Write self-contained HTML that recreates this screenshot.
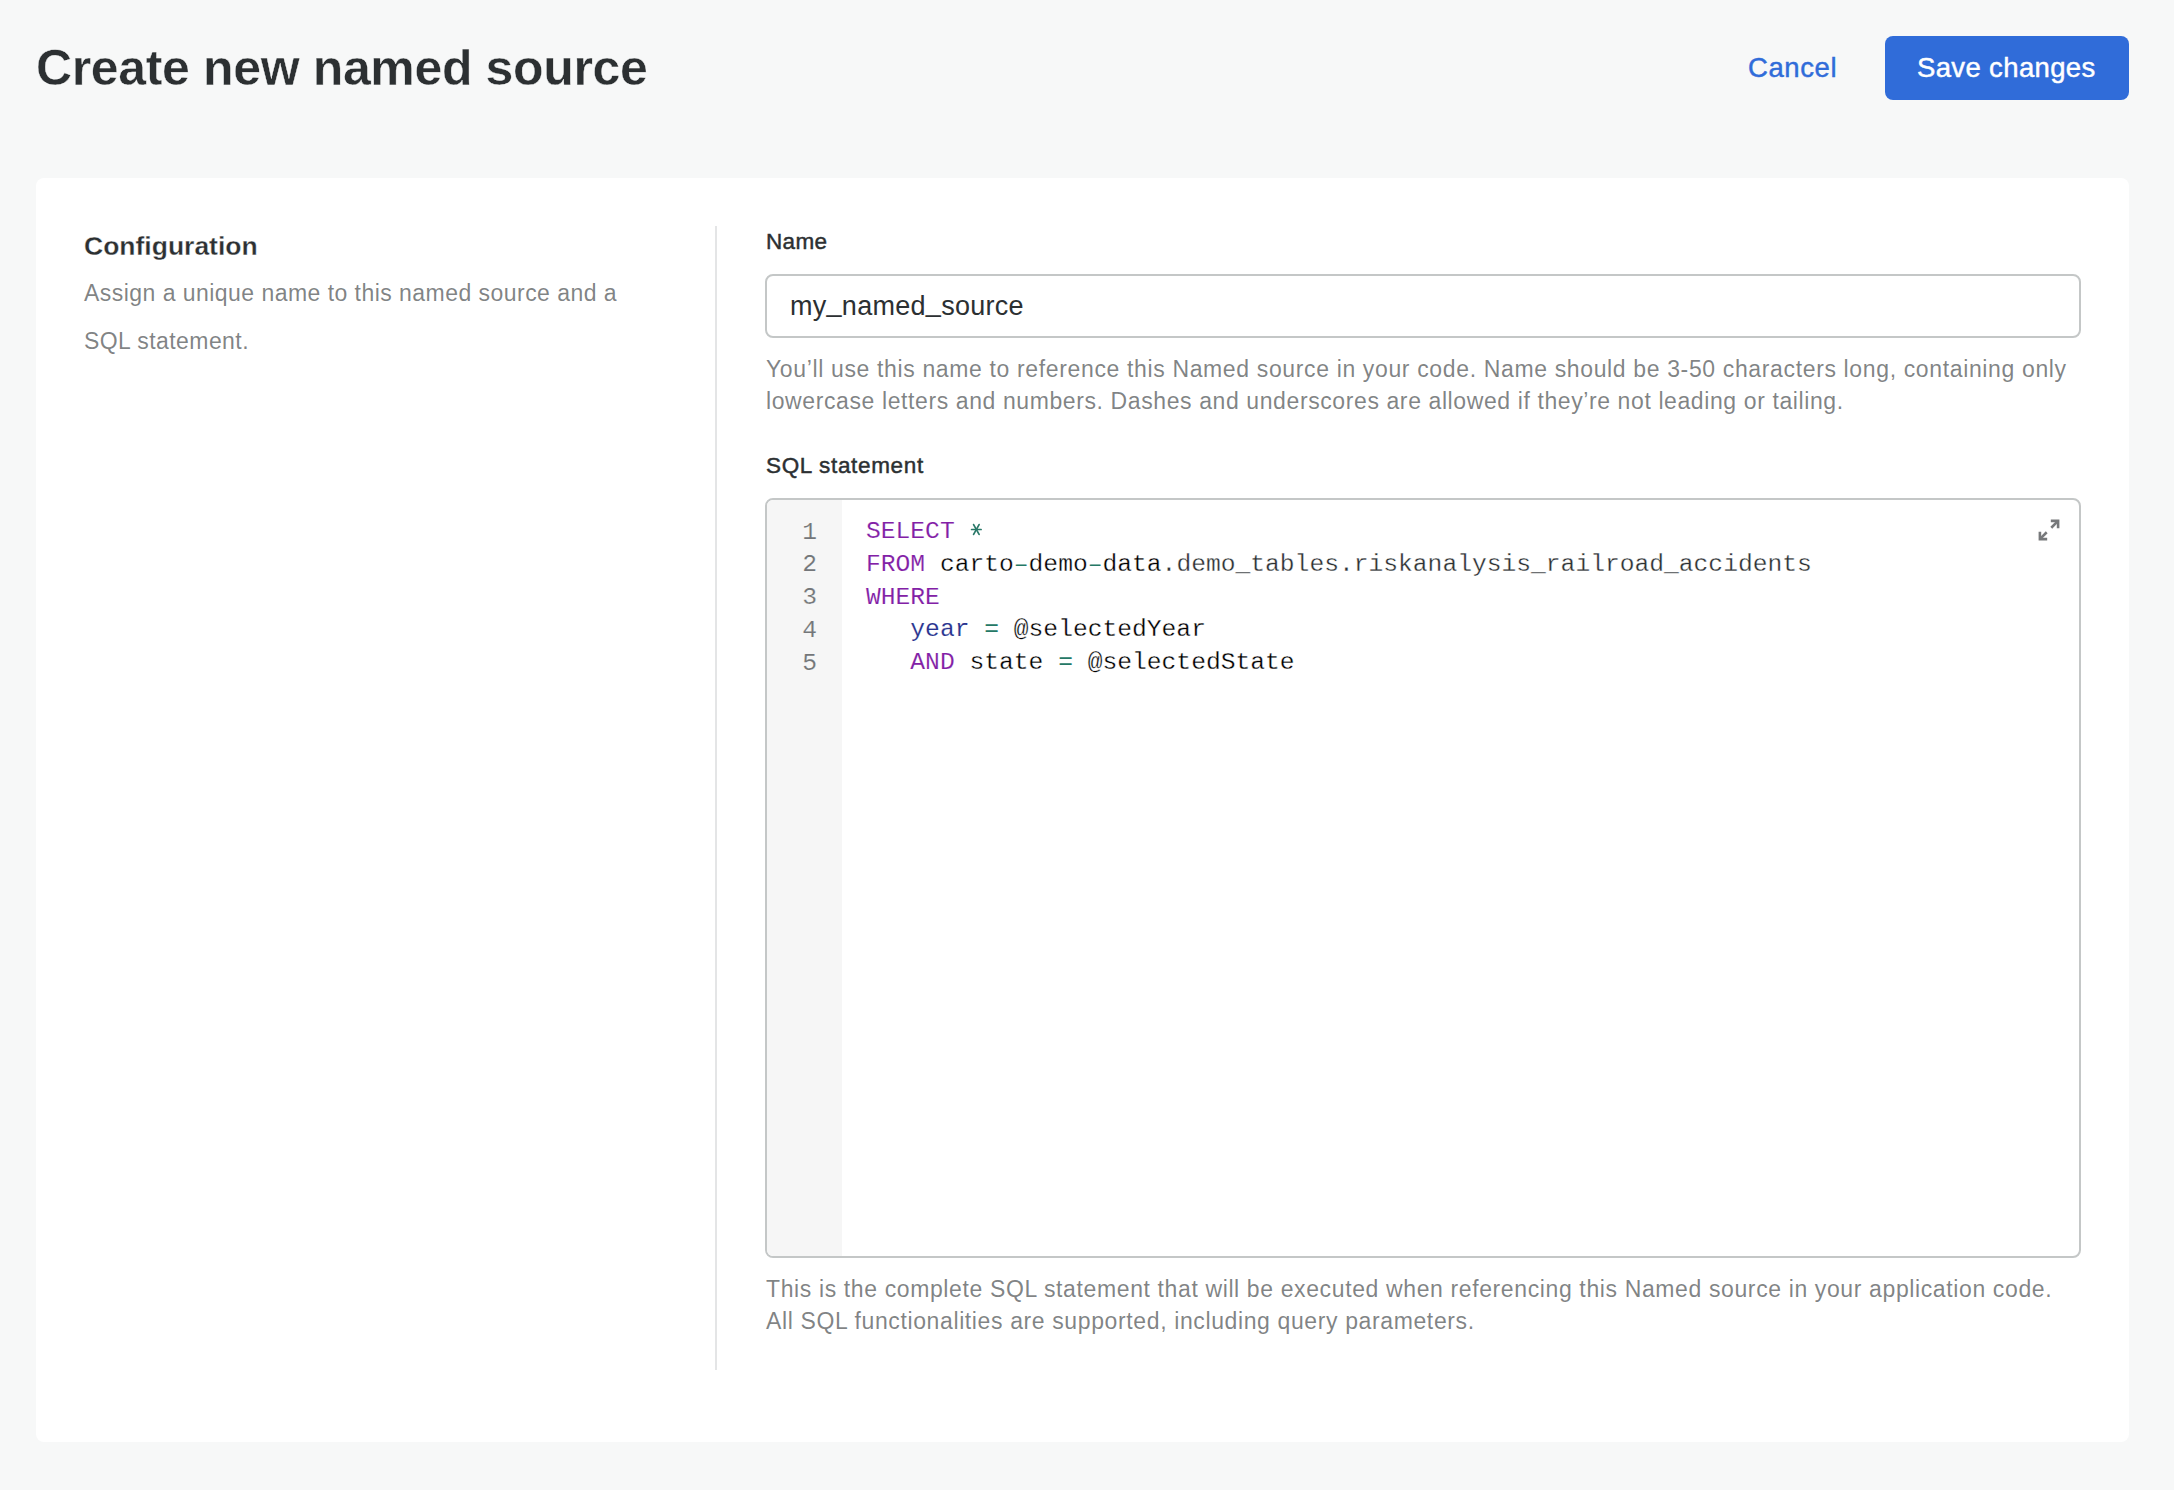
<!DOCTYPE html>
<html>
<head>
<meta charset="utf-8">
<style>
html,body{margin:0;padding:0;}
body{width:2174px;height:1490px;background:#f7f8f8;position:relative;overflow:hidden;font-family:"Liberation Sans",sans-serif;color:#2c3032;}
.abs{position:absolute;white-space:nowrap;}
#title{left:36px;top:39.5px;font-size:50px;letter-spacing:-0.36px;-webkit-text-stroke:0.4px #f7f8f8;font-weight:700;line-height:56px;color:#2c3032;}
#cancel{left:1748px;top:52px;font-size:27.5px;letter-spacing:0.6px;-webkit-text-stroke:0.45px #306cd9;line-height:32px;color:#306cd9;}
#save{left:1885px;top:36px;width:244px;height:64px;background:#306cd9;border-radius:8px;}
#savetxt{left:1917px;top:52px;font-size:27.5px;letter-spacing:0.36px;-webkit-text-stroke:0.45px #fff;line-height:32px;color:#fff;}
#card{left:36px;top:178px;width:2093px;height:1264px;background:#fff;border-radius:8px;}
#config{left:84px;top:230px;font-size:26.5px;font-weight:700;-webkit-text-stroke:0.3px #fff;line-height:32px;color:#2c3032;}
.desc{left:84px;font-size:23px;line-height:32px;color:rgba(44,48,50,0.6);}
#divider{left:715px;top:226px;width:2px;height:1144px;background:#e4e5e6;}
.label{left:766px;font-size:22.5px;letter-spacing:0.33px;-webkit-text-stroke:0.45px #2c3032;line-height:28px;color:#2c3032;}
#input{left:765px;top:274px;width:1312px;height:60px;border:2px solid #c4c7c7;border-radius:8px;background:#fff;}
#inputtxt{left:790px;top:290px;font-size:27px;letter-spacing:0.28px;line-height:32px;color:#2c3032;}
.help{left:766px;font-size:23px;line-height:32px;color:rgba(44,48,50,0.6);}
#editor{left:765px;top:498px;width:1312px;height:756px;border:2px solid #c4c7c7;border-radius:8px;background:#fff;overflow:hidden;}
#gutter{position:absolute;left:0;top:0;width:75px;height:100%;background:#f6f6f6;}
.ln{position:absolute;right:25px;font-family:"Liberation Mono",monospace;font-size:24.64px;-webkit-text-stroke:0.15px #f6f6f6;line-height:32.8px;color:#737679;}
.code{position:absolute;left:99px;font-family:"Liberation Mono",monospace;font-size:24.64px;-webkit-text-stroke:0.3px #fff;line-height:32.8px;color:#000;white-space:pre;}
.kw{color:#8220a6;-webkit-text-stroke:0.12px #fff;}
.op{color:#257866;-webkit-text-stroke:0px #fff;}
.at{color:#29348f;-webkit-text-stroke:0.12px #fff;}
.pr{color:#2c3032;}
.us{position:relative;top:-4px;}
#expand{left:2036px;top:517px;width:26px;height:26px;}
</style>
</head>
<body>
<div class="abs" id="title">Create new named source</div>
<div class="abs" id="cancel">Cancel</div>
<div class="abs" id="save"></div>
<div class="abs" id="savetxt">Save changes</div>
<div class="abs" id="card"></div>
<div class="abs" id="config">Configuration</div>
<div class="abs desc" style="top:277px;letter-spacing:0.46px">Assign a unique name to this named source and a</div>
<div class="abs desc" style="top:325px;letter-spacing:0.43px">SQL statement.</div>
<div class="abs" id="divider"></div>
<div class="abs label" style="top:228px">Name</div>
<div class="abs" id="input"></div>
<div class="abs" id="inputtxt">my<span class="us">_</span>named<span class="us">_</span>source</div>
<div class="abs help" style="top:353px;letter-spacing:0.64px">You’ll use this name to reference this Named source in your code. Name should be 3-50 characters long, containing only</div>
<div class="abs help" style="top:385px;letter-spacing:0.6px">lowercase letters and numbers. Dashes and underscores are allowed if they’re not leading or tailing.</div>
<div class="abs label" style="top:452px;letter-spacing:0.66px">SQL statement</div>
<div class="abs" id="editor">
  <div id="gutter">
    <div class="ln" style="top:15.5px">1</div>
    <div class="ln" style="top:48.3px">2</div>
    <div class="ln" style="top:81.1px">3</div>
    <div class="ln" style="top:113.9px">4</div>
    <div class="ln" style="top:146.7px">5</div>
  </div>
  <div class="code" style="top:15.0px"><span class="kw">SELECT</span></div>
  <div class="code" style="top:47.8px"><span class="kw">FROM</span> carto<span class="op">–</span>demo<span class="op">–</span>data<span class="pr">.demo_tables.riskanalysis_railroad_accidents</span></div>
  <div class="code" style="top:80.6px"><span class="kw">WHERE</span></div>
  <div class="code" style="top:113.4px">   <span class="at">year</span> <span class="op">=</span> @selectedYear</div>
  <div class="code" style="top:146.2px">   <span class="kw">AND</span> state <span class="op">=</span> @selectedState</div>
</div>
<svg class="abs" style="left:969px;top:522px;width:15px;height:15px" viewBox="0 0 15 15">
  <g stroke="#2a7868" stroke-width="1.7" stroke-linecap="round" fill="none">
    <path d="M2.6 7.5H12.1"/><path d="M4.6 2.6L10.1 12.4"/><path d="M10.1 2.6L4.6 12.4"/>
  </g>
</svg>
<svg class="abs" id="expand" viewBox="0 0 26 26">
  <path d="M14.82 3.9H22.1V11.18" fill="none" stroke="#77797b" stroke-width="2.6"/>
  <path d="M21.6 4.36L15.28 10.72" fill="none" stroke="#77797b" stroke-width="2.6"/>
  <path d="M3.9 14.82V22.1H11.18" fill="none" stroke="#77797b" stroke-width="2.6"/>
  <path d="M4.36 21.6L10.72 15.28" fill="none" stroke="#77797b" stroke-width="2.6"/>
</svg>
<div class="abs help" style="top:1273px;letter-spacing:0.62px">This is the complete SQL statement that will be executed when referencing this Named source in your application code.</div>
<div class="abs help" style="top:1305px;letter-spacing:0.62px">All SQL functionalities are supported, including query parameters.</div>
</body>
</html>
